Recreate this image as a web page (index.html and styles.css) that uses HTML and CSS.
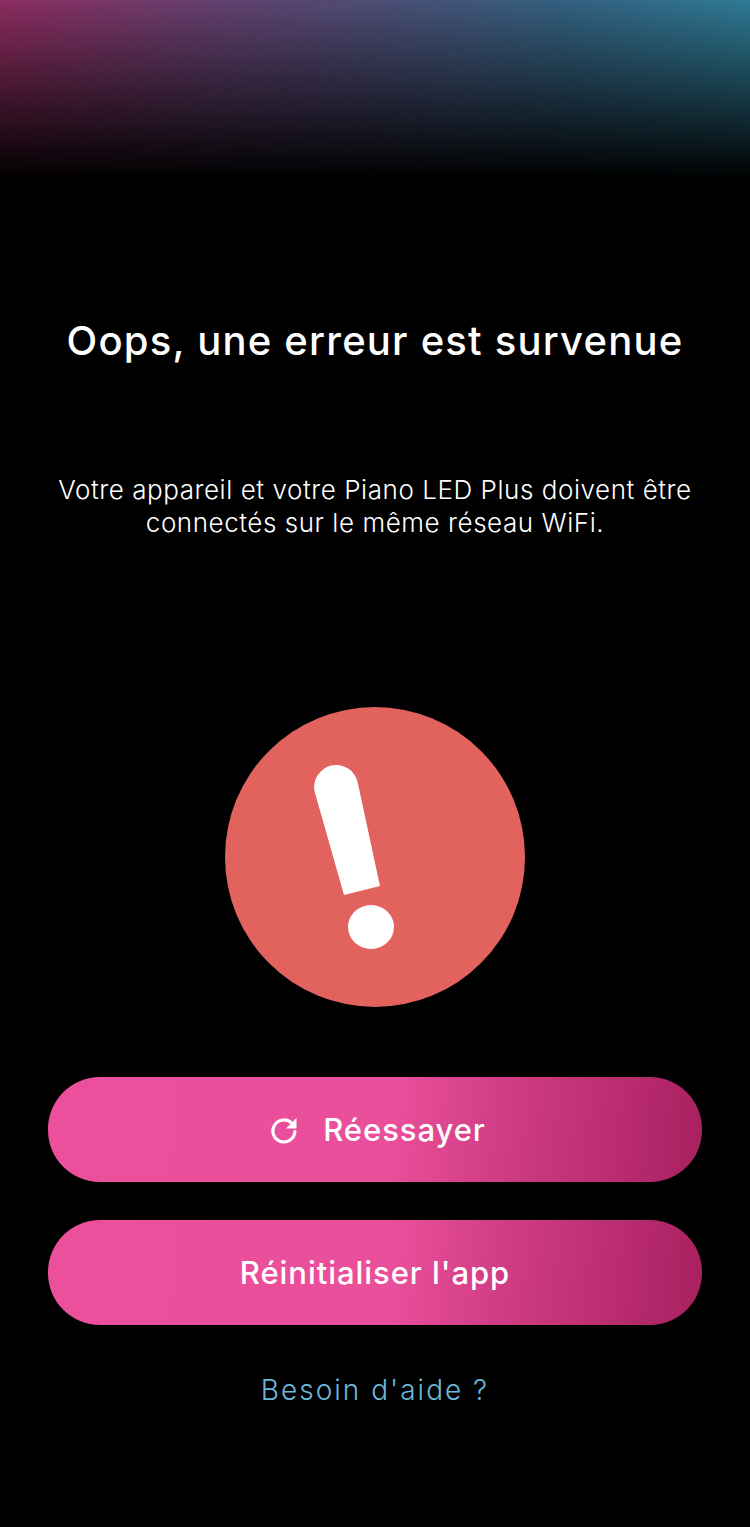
FILE: index.html
```html
<!DOCTYPE html>
<html lang="fr">
<head>
<meta charset="utf-8">
<title>Erreur</title>
<link rel="stylesheet" href="styles.css">
</head>
<body>
<main class="screen">
  <h1 class="title">Oops, une erreur est survenue</h1>
  <p class="message">Votre appareil et votre Piano LED Plus doivent être<br>connectés sur le même réseau WiFi.</p>
  <svg class="alert" viewBox="0 0 300 300" aria-hidden="true">
    <circle cx="150" cy="150" r="150" fill="#e2635e"/>
    <path d="M119 188 L90 86 A22 22 0 1 1 132.7 75.5 L155 179 Z" fill="#fff"/>
    <ellipse cx="146" cy="220" rx="23" ry="22" fill="#fff"/>
  </svg>
  <div class="actions">
    <button class="btn btn-retry" type="button">
      <svg class="btn-icon" viewBox="0 0 28 28" aria-hidden="true">
        <path d="M22 7.5 A11 11 0 1 0 24.9 15.5" fill="none" stroke="#fff" stroke-width="3.2" stroke-linecap="round"/>
        <path d="M26.5 2 V12.5 H16 Z" fill="#fff"/>
      </svg>
      <span>Réessayer</span>
    </button>
    <button class="btn" type="button"><span>Réinitialiser l'app</span></button>
  </div>
  <a class="help" href="#">Besoin d'aide ?</a>
</main>
</body>
</html>
```
FILE: styles.css
```css
* { box-sizing: border-box; }
html, body { margin: 0; background: #000; }
body { font-family: Inter, "Noto Sans", sans-serif; color: #fff; }
.screen {
  min-height: 1527px;
  width: 750px;
  display: flex;
  flex-direction: column;
  align-items: center;
  padding-top: 318px;
  background:
    linear-gradient(to bottom, rgba(0,0,0,0) 0, rgba(0,0,0,1) 180px) no-repeat,
    linear-gradient(90deg, #8c2c5f 0%, #64406f 28%, #4c4d75 50%, #33607f 75%, #2f7a94 100%) no-repeat;
  background-size: 100% 180px;
}
.title {
  margin: 0;
  font-size: 40px;
  line-height: 46px;
  font-weight: 500;
  letter-spacing: 1.2px;
  text-align: center;
}
.message {
  margin: 109px 0 0;
  font-size: 26px;
  line-height: 33px;
  font-weight: 300;
  letter-spacing: 0.55px;
  text-align: center;
}
.alert {
  display: block;
  width: 300px;
  height: 300px;
  margin-top: 168px;
}
.actions {
  display: flex;
  flex-direction: column;
  gap: 38px;
  margin-top: 70px;
}
.btn {
  width: 654px;
  height: 105px;
  padding: 0;
  border: 0;
  border-radius: 52px;
  display: flex;
  align-items: center;
  justify-content: center;
  gap: 25px;
  font-family: inherit;
  font-size: 31px;
  font-weight: 500;
  letter-spacing: 0.95px;
  color: #fff;
  background: linear-gradient(96deg, #ec4f9c 0%, #ea4f9b 52%, #cc3a80 72%, #a82060 100%);
}
.btn-retry { padding-left: 6px; }
.btn-icon { width: 28px; height: 28px; }
.help {
  margin-top: 47px;
  font-size: 28px;
  line-height: 36px;
  font-weight: 300;
  letter-spacing: 2px;
  color: #6ab8dc;
  text-decoration: none;
}
```
